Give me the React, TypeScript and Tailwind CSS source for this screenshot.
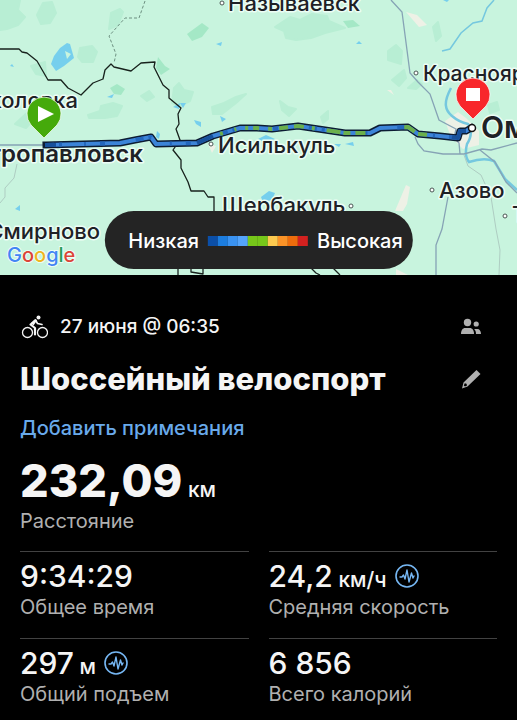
import type { ReactNode } from "react"

const legendColors = [
  "bg-[#0b4fa8]",
  "bg-[#1c7ddf]",
  "bg-[#3a93f2]",
  "bg-[#54a4fb]",
  "bg-[#76c71a]",
  "bg-[#76c71a]",
  "bg-[#fcc94f]",
  "bg-[#fb9327]",
  "bg-[#ee6c0c]",
  "bg-[#d3211f]",
]

const routePath =
  "M46 145 L120 143 L135 140 L151 137 L156 144 L197 143 L213 136 L240 128 L257 128 L272 129 L298 126 L325 130 L345 133 L370 133 L380 128 L408 127 L418 134 L440 136 L458 138 L460 131 L466 131 L471 128"

const places = [
  { name: "Называевск", x: 228, y: 11, size: 22, weight: 500 },
  { name: "Красноярка", x: 423, y: 81, size: 21, weight: 500 },
  { name: "Соколовка", x: 78, y: 108, size: 22, weight: 500, end: true },
  { name: "Петропавловск", x: 143, y: 162, size: 24, weight: 600, end: true },
  { name: "Исилькуль", x: 218, y: 153, size: 22, weight: 500 },
  { name: "Омск", x: 481, y: 138, size: 30, weight: 600 },
  { name: "Азово", x: 439, y: 198, size: 22, weight: 500 },
  { name: "Щербакуль", x: 222, y: 213, size: 22, weight: 500 },
  { name: "Смирново", x: 100, y: 239, size: 22, weight: 500, end: true },
  { name: "Та", x: 512, y: 222, size: 22, weight: 500 },
]

const towns = [
  [222, 3],
  [416, 73],
  [211, 144],
  [432, 190],
  [351, 206],
  [505, 216],
]

function RouteMap() {
  return (
    <svg
      viewBox="0 0 517 275"
      preserveAspectRatio="xMidYMid slice"
      className="block h-[275px] w-full bg-[#c8f4de]"
      role="img"
      aria-label="Карта маршрута"
      fontFamily="Inter, sans-serif"
    >
      {/* forest */}
      <g fill="#b8eed4" stroke="#b8eed4" strokeWidth="2" strokeLinejoin="round">
        <path d="M0 0H20L18 10L25 17L18 25L7 29L0 30Z" />
        <path d="M43 3L52 2L56 13L50 23L41 24L37 15Z" />
        <path d="M111 13L120 9L123 12L118 25L109 29Z" />
        <path d="M80 48L92 46L97 52L93 62L82 62L78 57Z" />
        <path d="M31 66L45 62L46 76L36 74Z" />
        <path d="M101 106L113 103L122 106L117 116L105 118L89 118L88 115L100 111Z" />
        <path d="M174 88L179 83L184 90L193 92L190 101L178 107L172 103Z" />
        <path d="M212 107L224 103L236 97L246 94L236 103L222 114L213 114Z" />
        <path d="M275 27L290 17L300 20L312 14L327 16L329 21L345 28L325 33L311 38L296 40L286 38L284 31Z" />
        <path d="M388 51L396 45L402 51L401 64L388 60Z" />
        <path d="M433 27L438 22L441 36L436 41Z" />
        <path d="M392 80L404 70L406 78L399 86Z" />
        <path d="M408 88L417 80L422 84L416 89Z" />
        <path d="M280 101L288 107L296 109L289 116L282 110Z" />
        <path d="M321 117L328 111L328 119L323 123Z" />
        <path d="M488 105L497 102L499 110L490 113Z" />
        <path d="M141 96L149 91L154 97L147 101Z" />
        <path d="M15 124L29 111L33 120L26 128Z" />
      </g>
      <g fill="#a4e8c6">
        <path d="M187 34L202 23L209 28L202 37L192 41Z" />
        <path d="M158 57L165 66L170 69L161 75L156 68Z" />
        <path d="M110 88L117 84L125 89L121 95L114 94Z" />
        <path d="M343 21L353 20L360 26L348 28Z" />
      </g>
      {/* sand and city ground */}
      <g fill="#eef1e6">
        <path d="M406 12L417 15L427 25L419 27Z" />
        <path d="M387 90L391 90L394 95Z" />
        <path d="M406 185L410 187L407 204L403 211H395Z" />
        <path d="M396 269L408 275H396Z" />
        <path d="M208 144L216 146L212 153Z" />
        <path d="M445 121L458 112L466 118L479 131L479 145L463 149L451 137Z" />
      </g>
      {/* lakes */}
      <g fill="#76cfed">
        <path d="M54 56L60 48L67 43L70 44L74 58L64 66L56 71L51 64Z" />
        <path d="M10 66L12 64L14 67Z" />
        <path d="M107 97L114 94L112 98Z" />
        <path d="M216 44L222 42L221 46Z" />
        <path d="M173 107L180 103L179 109Z" />
        <path d="M180 103L186 103L183 108Z" />
        <path d="M194 120L201 122L201 127L196 124Z" />
        <path d="M220 116L226 119L222 122Z" />
        <path d="M356 44L359 41L362 44Z" />
        <path d="M443 0L449 0L447 2Z" />
        <path d="M15 209L20 205L20 211Z" />
        <path d="M157 131L160 134L159 139L156 137Z" />
        <path d="M258 139L266 135L275 139L264 142Z" />
        <path d="M334 144L341 144L339 147Z" />
        <path d="M345 144L353 142L354 146Z" />
        <path d="M261 197L269 191L275 193L272 200L263 202Z" />
      </g>
      <path d="M65 51L71 54L67 59Z" fill="#c8f4de" />
      <g fill="none" stroke="#75c8df">
        <path d="M494 0L487 8L482 21L473 23L461 33L450 49L442 51" strokeWidth="1.5" />
        <path d="M451 88C443 103 445 110 452 116Q459 122 468 124Q474 133 467 144Q464 156 469 162Q484 157 494 161L505 179L517 190" strokeWidth="2.5" />
      </g>
      {/* roads */}
      <g fill="none" stroke="#86a3b5" strokeWidth="1.3">
        <path d="M391 0L402 12L410 73L418 82L430 94L439 120L456 129L454 138L459 143L460 154" />
        <path d="M0 145H45" />
        <path d="M415 137L418 144L424 151L443 154H464L482 149L491 150L517 143" />
        <path d="M480 150L495 162L506 182L517 193" />
        <path d="M448 197L442 229L436 245V275" />
      </g>
      <g fill="none" stroke="#aecdc2">
        <path d="M17 164L14 178L5 188V197L0 203" />
        <path d="M464 155L468 166L481 175L491 197L496 229L500 250L499 275" />
      </g>
      {/* regional borders */}
      <g fill="none" stroke="#17211c" strokeWidth="1.3" strokeLinejoin="round">
        <path d="M0 49H19L22 52L27 53L37 61L48 80H61L68 88L81 95L93 83L103 79L105 70L111 64L114 67L131 71L141 63L155 62L154 67L163 85L169 90V98L181 108L178 114L179 124L176 129L180 140L173 150L181 160V168L188 182L191 191H204L206 194L208 197H214V212" />
        <path d="M178 267V275M191 268V272L203 274V268M311 268L316 273L320 275M333 268L340 275" />
      </g>
      <path d="M145 1L139 18H125L109 36L116 54L114 63" fill="none" stroke="#6c8f80" strokeDasharray="3 2" />
      {towns.map(([x, y]) => (
        <circle key={`${x}-${y}`} cx={x} cy={y} r="2" fill="#fff" stroke="#4b5754" />
      ))}
      <g fill="#1e2126" stroke="#ecfdf5" strokeWidth="3" strokeLinejoin="round" paintOrder="stroke">
        {places.map((place) => (
          <text
            key={place.name}
            x={place.x}
            y={place.y}
            fontSize={place.size}
            fontWeight={place.weight}
            textAnchor={place.end ? "end" : "start"}
          >
            {place.name}
          </text>
        ))}
      </g>
      {/* route, tinted by speed */}
      <g fill="none" strokeLinejoin="round">
        <path d={routePath} stroke="#0c1c33" strokeWidth="7" strokeLinecap="square" />
        <path d={routePath} stroke="#3c84d8" strokeWidth="4" />
        <path d={routePath} stroke="#2467bd" strokeWidth="4" strokeDasharray="8 5 3 22 2 14 5 31" />
        <path
          d={routePath}
          stroke="#6bb04c"
          strokeWidth="4"
          strokeDasharray="0 180 3 12 2 9 3 5 6 9 4 7 9 6 10 8 3 12 14 3 7 5 10 40 12 4 9 500"
        />
        <path d="M45 145L56 145M197 143L213 136M452 137L458 138L460 131L466 131" stroke="#17519c" strokeWidth="4" />
      </g>
      <circle cx="472" cy="128" r="3.5" fill="#fff" stroke="#111" strokeWidth="1.5" />
      <Pin x={44} y={114} fill="#45aa0b">
        <path d="M38 106V122L54 114Z" fill="#fff" />
      </Pin>
      <Pin x={473} y={95} fill="#f8272b">
        <path d="M466 88H480V101H466Z" fill="#fff" />
      </Pin>
      <g fontSize="20" fontWeight="500" stroke="#ecfdf5" strokeWidth="2" paintOrder="stroke">
        <text x="7" y="262">
          <tspan fill="#4285f4">G</tspan>
          <tspan fill="#dc4437">o</tspan>
          <tspan fill="#f0b51d">o</tspan>
          <tspan fill="#4285f4">g</tspan>
          <tspan fill="#279e58">l</tspan>
          <tspan fill="#dc4437">e</tspan>
        </text>
      </g>
    </svg>
  )
}

function Pin({ x, y, fill, children }: { x: number; y: number; fill: string; children: ReactNode }) {
  return (
    <g>
      <path
        d={`M${x} ${y + 24}L${x - 13} ${y + 11}A17 17 0 1 1 ${x + 13} ${y + 11}Z`}
        fill={fill}
        stroke="#fff"
        strokeOpacity="0.7"
        strokeLinejoin="round"
      />
      {children}
    </g>
  )
}

function BikeIcon() {
  return (
    <svg viewBox="0 0 28 24" className="h-6 w-7" fill="none" stroke="currentColor" aria-hidden="true">
      <g strokeWidth="1.300">
        <circle cx="7.500" cy="17.500" r="5" />
        <circle cx="22.500" cy="17.500" r="5" />
      </g>
      <circle cx="18.500" cy="2.500" r="2" fill="currentColor" stroke="none" />
      <path d="M15.500 5.500L10.500 9.500L15 13V19.500" strokeWidth="2.200" strokeLinejoin="round" strokeLinecap="round" />
      <path d="M15.500 5L17.500 8.500L22 9.500" strokeWidth="1.600" strokeLinejoin="round" strokeLinecap="round" />
      <path d="M11 8L14.500 4.500L17 5.500L13.500 10.500Z" fill="currentColor" stroke="none" />
    </svg>
  )
}

function PeopleIcon() {
  return (
    <svg viewBox="0 0 20 20" className="size-5" fill="currentColor" aria-hidden="true">
      <circle cx="6.500" cy="5.500" r="3.700" />
      <path d="M0 17C0 13 2 11 4 11H9C11 11 13 13 13 17Z" />
      <circle cx="15.200" cy="7" r="2.600" />
      <path d="M13 12H16.500C18.500 12 20 14 20 17H15C15 14.500 14.300 13 13 12Z" />
    </svg>
  )
}

function PencilIcon() {
  return (
    <svg viewBox="0 0 20 20" className="size-5" fill="currentColor" aria-hidden="true">
      <path
        fillRule="evenodd"
        d="M15.500 1L19.500 5L6.500 17.500L1 19.500L2.500 13.500ZM3.800 14.300L2.800 16.500L4 17.600L6 16.500L5.500 14.800Z"
      />
    </svg>
  )
}

function ActivityIcon() {
  return (
    <svg viewBox="0 0 24 24" className="size-6 text-[#76b7f3]" fill="none" stroke="currentColor" aria-hidden="true">
      <circle cx="12" cy="12" r="11" strokeWidth="1.600" />
      <path
        d="M5 13H7L8.500 11L10 15L12 6L14 18L16.500 9L18 14L19 12"
        strokeWidth="1.400"
        strokeLinejoin="round"
        strokeLinecap="round"
      />
    </svg>
  )
}

function Stat({ label, value, unit, info }: { label: string; value: string; unit?: string; info?: boolean }) {
  return (
    <div className="flex flex-col-reverse border-t border-[#424242] pt-2 pb-4">
      <dt className="text-xl leading-[30px] text-[#b0b0b0]">{label}</dt>
      <dd className="flex h-8 items-center gap-2">
        <span className="text-3xl leading-8 font-medium whitespace-nowrap">
          {value}
          {unit && <span className="text-[21px] leading-none"> {unit}</span>}
        </span>
        {info && (
          <button type="button" aria-label={`Подробнее: ${label}`}>
            <ActivityIcon />
          </button>
        )}
      </dd>
    </div>
  )
}

export default function App() {
  return (
    <main className="min-h-screen bg-black font-['Inter',sans-serif] text-[#f5f5f5]">
      <div className="relative">
        <RouteMap />
        <div className="absolute bottom-[6px] left-1/2 flex h-[58px] -translate-x-1/2 items-center gap-[9px] rounded-full bg-[#242424] pt-[2px] pr-[10px] pl-6 text-xl font-medium text-white">
          <span>Низкая</span>
          <div className="flex h-[10px]">
            {legendColors.map((color, i) => (
              <span key={i} className={`w-[10px] ${color}`} />
            ))}
          </div>
          <span>Высокая</span>
        </div>
      </div>

      <section className="px-5 pt-9">
        <div className="flex h-8 items-center justify-between">
          <div className="flex items-center gap-3">
            <BikeIcon />
            <time className="text-[19px] font-medium">27 июня @ 06:35</time>
          </div>
          <button type="button" aria-label="Доступ" className="px-4 text-[#b0b0b0]">
            <PeopleIcon />
          </button>
        </div>

        <div className="mt-4 flex h-10 items-center justify-between">
          <h1 className="text-[31px] font-extrabold whitespace-nowrap">Шоссейный велоспорт</h1>
          <button type="button" aria-label="Изменить название" className="px-4 text-[#b0b0b0]">
            <PencilIcon />
          </button>
        </div>

        <a href="#notes" className="mt-3 block w-fit text-xl leading-[34px] font-medium text-[#69aaeb]">
          Добавить примечания
        </a>

        <p className="mt-[10px] text-[45px] leading-[52px] font-extrabold">
          232,09
          <span className="text-[21px] leading-none font-medium"> км</span>
        </p>
        <p className="text-xl leading-7 text-[#b0b0b0]">Расстояние</p>

        <dl className="mt-4 grid grid-cols-2 gap-x-5">
          <Stat label="Общее время" value="9:34:29" />
          <Stat label="Средняя скорость" value="24,2" unit="км/ч" info />
          <Stat label="Общий подъем" value="297" unit="м" info />
          <Stat label="Всего калорий" value="6 856" />
        </dl>
      </section>
    </main>
  )
}
